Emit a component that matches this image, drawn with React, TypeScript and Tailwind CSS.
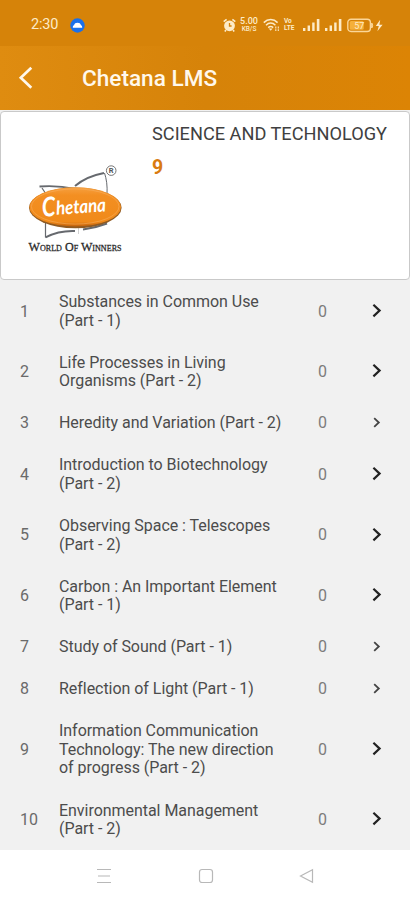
import { ReactNode } from "react";

interface Chapter {
    id: number;
    lines: string[];
    count: number;
}

const chapters: Chapter[] = [
    { id: 1, lines: ["Substances in Common Use", "(Part - 1)"], count: 0 },
    { id: 2, lines: ["Life Processes in Living", "Organisms (Part - 2)"], count: 0 },
    { id: 3, lines: ["Heredity and Variation (Part - 2)"], count: 0 },
    { id: 4, lines: ["Introduction to Biotechnology", "(Part - 2)"], count: 0 },
    { id: 5, lines: ["Observing Space : Telescopes", "(Part - 2)"], count: 0 },
    { id: 6, lines: ["Carbon : An Important Element", "(Part - 1)"], count: 0 },
    { id: 7, lines: ["Study of Sound (Part - 1)"], count: 0 },
    { id: 8, lines: ["Reflection of Light (Part - 1)"], count: 0 },
    { id: 9, lines: ["Information Communication", "Technology: The new direction", "of progress (Part - 2)"], count: 0 },
    { id: 10, lines: ["Environmental Management", "(Part - 2)"], count: 0 },
];

function SignalBars() {
    return (
        <svg width="17" height="14" viewBox="0 0 17 14" fill="#fdebc8">
            <rect x="0" y="10" width="2.4" height="3" />
            <rect x="4.6" y="7.5" width="2.4" height="5.5" />
            <rect x="9.2" y="4.5" width="2.4" height="8.5" />
            <rect x="13.8" y="1" width="2.6" height="12" />
        </svg>
    );
}

function StatusBar() {
    return (
        <div className="flex h-[46px] items-center bg-[#d68309] pt-1 pl-[31px] text-[#fdebc8]">
            <span className="w-[39px] pt-px text-[14.5px] leading-none tracking-[-0.2px]">2:30</span>
            <svg width="15" height="15" viewBox="0 0 15 15">
                <circle cx="7.5" cy="7.5" r="7.2" fill="#1a70ea" />
                <path d="M2.8 9.8C2.8 8 3.4 7.4 4 7.3C4.4 5.6 5.6 4.8 7.5 4.8S10.6 5.6 11 7.3C11.6 7.4 12.2 8 12.2 9.8Z" fill="#fff" />
            </svg>
            <svg className="ml-[138px]" width="13" height="14" viewBox="0 0 13 14">
                <circle cx="6.5" cy="7.8" r="5.4" fill="#fdebc8" />
                <path d="M0.7 3.7L3.6 1.3M12.3 3.7L9.4 1.3M3 12L1.8 13.5M10 12L11.2 13.5" stroke="#fdebc8" strokeWidth="1.6" />
                <path d="M6.5 5V8H8.6" fill="none" stroke="#d68309" strokeWidth="1.3" />
            </svg>
            <div className="ml-[3px] flex w-[20px] flex-col items-center font-medium">
                <span className="text-[9px] leading-[9px]">5.00</span>
                <span className="text-[6.5px] leading-[7px]">KB/S</span>
            </div>
            <svg className="ml-[4px]" width="17" height="14" viewBox="0 0 17 14" fill="none" stroke="#fdebc8" strokeWidth="1.5">
                <path d="M0.8 4.6C4.8 0.6 10.6 0.6 14.6 4.6M3 7.2C5.8 4.4 9.6 4.4 12.4 7.2M5.2 9.6C6.8 8.2 8.6 8.2 10.2 9.6" />
                <path d="M5.8 10.4L7.7 12.8L9.6 10.4Z" fill="#fdebc8" stroke="none" />
                <path d="M12.8 8.5V13M15.3 8.5V13" strokeWidth="1.1" strokeDasharray="2 0.8" />
            </svg>
            <div className="ml-[4px] flex w-[15px] flex-col font-bold">
                <span className="text-[6.5px] leading-[7px]">Vo</span>
                <span className="text-[6.5px] leading-[7px]">LTE</span>
            </div>
            <div className="ml-[4px] flex gap-[5px]">
                <SignalBars />
                <SignalBars />
            </div>
            <svg className="ml-[5px]" width="37" height="15" viewBox="0 0 37 15">
                <rect x="0.8" y="1.3" width="22.6" height="12.2" rx="3.2" fill="none" stroke="#fbd698" strokeWidth="1.4" />
                <rect x="2.7" y="3" width="14" height="8.8" rx="1.5" fill="#f5b03a" />
                <path d="M24.6 5V10C26 9.6 26 5.4 24.6 5Z" fill="#fbd698" stroke="#fbd698" />
                <text x="12.3" y="10.6" textAnchor="middle" fontSize="9" fill="#fdebc8">57</text>
                <path d="M33.2 1.8L28.8 8H31.8L30.4 13.2L35.6 6.8H32.4Z" fill="#fdebc8" />
            </svg>
        </div>
    );
}

function Header() {
    return (
        <header className="flex h-[64px] items-center bg-linear-to-r from-[#df8c10] via-[#d68309] to-[#dc8405] pl-[18px]">
            <svg width="16" height="24" viewBox="0 0 16 24" fill="none" stroke="#fff8ec" strokeWidth="2.7">
                <path d="M13.3 1.8L2.8 11.8L13.3 21.8" />
            </svg>
            <h1 className="ml-[48px] pt-[2px] text-[22.6px] font-medium leading-none whitespace-nowrap text-[#fff8ec]">Chetana LMS</h1>
        </header>
    );
}

function Logo() {
    return (
        <svg width="110" height="92" viewBox="0 0 110 92">
            <defs>
                <linearGradient id="oval" x1="0" y1="0" x2="0" y2="1">
                    <stop offset="0" stopColor="#f6a040" />
                    <stop offset="0.2" stopColor="#f38f22" />
                    <stop offset="0.88" stopColor="#f08a1a" />
                    <stop offset="1" stopColor="#c0600c" />
                </linearGradient>
            </defs>
            <g fill="none" stroke="#66696e">
                <path d="M47 21C54 15 63 10.5 76 8" strokeWidth="2" />
                <path d="M11.5 21.5C24 20.5 36 21.5 47 24" strokeWidth="1.8" />
                <path d="M76.5 8C78.5 14 79.5 21 79 29" strokeWidth="1" />
                <path d="M14 23L18 29M17.5 56V72.5" strokeWidth="1.2" />
                <path d="M17.5 72.3C26 68 35 65.5 47 66" strokeWidth="2" />
                <path d="M50.5 62V69" stroke="#c6c6c6" strokeWidth="0.8" />
                <path d="M55 64.5C63 63.5 71 61.5 79 58.5" strokeWidth="2.2" />
            </g>
            <ellipse cx="47.3" cy="42.8" rx="46.3" ry="20.4" fill="#8f5a22" />
            <ellipse cx="47.2" cy="41.9" rx="45.8" ry="19.6" fill="url(#oval)" />
            <ellipse cx="47.2" cy="41.5" rx="43.8" ry="17.6" fill="none" stroke="#f9b366" strokeWidth="0.5" />
            <g transform="rotate(-4 47 42)" fill="#fff" fontFamily="Lato, sans-serif" fontStyle="italic" fontWeight="700">
                <text x="14" y="49.5" fontSize="27" textLength="13.5" lengthAdjust="spacingAndGlyphs">C</text>
                <text x="28" y="48.5" fontSize="19" textLength="50" lengthAdjust="spacingAndGlyphs">hetana</text>
            </g>
            <circle cx="83.2" cy="5.6" r="4.8" fill="none" stroke="#666" strokeWidth="0.9" />
            <text x="83.2" y="8.3" textAnchor="middle" fontSize="7.5" fontWeight="700" fill="#555">R</text>
            <text
                x="0.5"
                y="86"
                fontSize="13.5"
                textLength="93"
                lengthAdjust="spacingAndGlyphs"
                fill="#2b2b2b"
                stroke="#2b2b2b"
                strokeWidth="0.3"
                fontFamily="'Liberation Serif', serif"
                style={{ fontVariant: "small-caps" }}
            >
                World Of Winners
            </text>
        </svg>
    );
}

function SubjectCard() {
    return (
        <section className="mt-px flex h-[169px] rounded-[4px] border border-[#c9c9c9] bg-white">
            <div className="w-[151px] shrink-0 pt-[53px] pl-[27px]">
                <Logo />
            </div>
            <div className="pt-[11px] whitespace-nowrap">
                <h2 className="text-[18.2px] leading-[22px] text-[#404040]">SCIENCE AND TECHNOLOGY</h2>
                <p className="mt-[11px] text-[19.5px] font-bold leading-[24px] text-[#d97b10]">9</p>
            </div>
        </section>
    );
}

function ChapterRow({ chapter }: { chapter: Chapter }) {
    const single = chapter.lines.length === 1;
    return (
        <li className="flex items-center py-[11.75px] pl-5 text-[16px] leading-[18.55px] tracking-[-0.04px] whitespace-nowrap">
            <span className="w-[39px] text-[#6a6a6a]">{chapter.id}</span>
            <div className="w-[259px] text-[#4c4c4c]">
                {chapter.lines.map((line) => (
                    <div key={line}>{line}</div>
                ))}
            </div>
            <span className="w-[52px] text-[#7c7c7c]">{chapter.count}</span>
            {single ? (
                <svg className="-mt-px ml-[2px]" width="9" height="12" viewBox="0 0 9 12" fill="none" stroke="#444" strokeWidth="1.8">
                    <path d="M2.2 1.2L6.8 5.5L2.2 9.8" />
                </svg>
            ) : (
                <svg className="-mt-[2px] ml-[2px]" width="10" height="16" viewBox="0 0 10 16" fill="none" stroke="#222" strokeWidth="2.2">
                    <path d="M1.4 1.8L7.6 7.6L1.4 13.4" />
                </svg>
            )}
        </li>
    );
}

function NavItem({ children }: { children: ReactNode }) {
    return (
        <svg width="16" height="16" viewBox="0 0 16 16" fill="none" stroke="#b8b8b8" strokeWidth="1.2">
            {children}
        </svg>
    );
}

function NavBar() {
    return (
        <nav className="flex h-[50px] items-center justify-center gap-[85px] bg-white pt-[2px] pl-px">
            <NavItem>
                <path d="M0 1.5H14M1 8H13M0 14.5H14" />
            </NavItem>
            <NavItem>
                <rect x="1.5" y="1.5" width="13" height="13" rx="2.5" />
            </NavItem>
            <NavItem>
                <path d="M1.5 8L13.5 1.8V14.2Z" />
            </NavItem>
        </nav>
    );
}

export default function App() {
    return (
        <div className="flex h-[900px] w-[410px] flex-col overflow-hidden bg-[#f1f1f1] font-['Roboto',sans-serif]">
            <StatusBar />
            <Header />
            <SubjectCard />
            <ul className="min-h-0 flex-1 overflow-hidden pt-[1.5px]">
                {chapters.map((chapter) => (
                    <ChapterRow key={chapter.id} chapter={chapter} />
                ))}
            </ul>
            <NavBar />
        </div>
    );
}
